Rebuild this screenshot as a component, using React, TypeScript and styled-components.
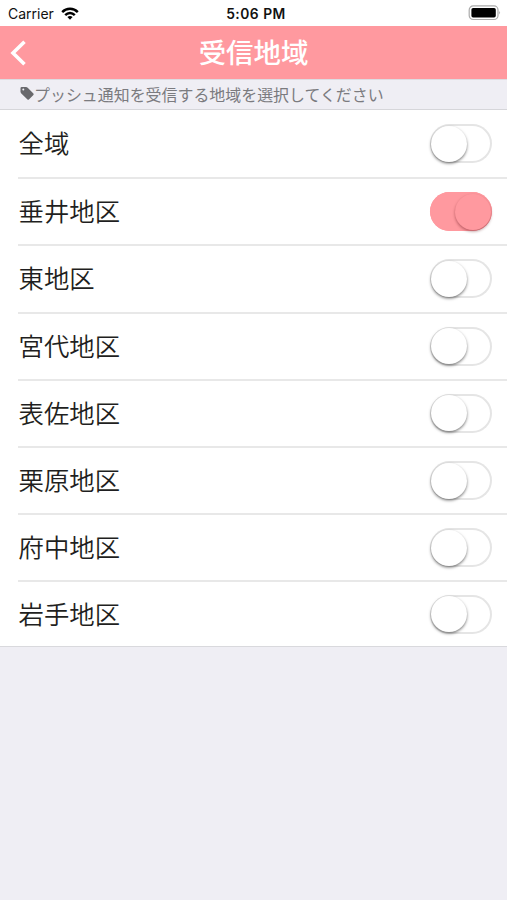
import React, { useState } from "react";
import styled, { createGlobalStyle } from "styled-components";

const GlobalStyle = createGlobalStyle`
  * { box-sizing: border-box; }
  body {
    margin: 0;
    background: #efeef4;
    font-family: "Noto Sans CJK JP", sans-serif;
  }
`;

const Screen = styled.div`
  width: 100%;
  min-height: 900px;
  background: #efeef4;
`;

const StatusBar = styled.div`
  display: grid;
  grid-template-columns: 1fr auto 1fr;
  align-items: center;
  height: 25.5px;
  padding: 1px 6px 0 8px;
  background: #fff;
  color: #111;
  font-family: Inter, sans-serif;
  font-size: 14px;
`;

const Carrier = styled.div`
  display: flex;
  align-items: center;
  gap: 7px;
`;

const Clock = styled.div`
  padding: 1px 0 0 3px;
  font-size: 13.8px;
  font-weight: 600;
  letter-spacing: 0.5px;
`;

const Battery = styled.svg`
  justify-self: end;
`;

const NavBar = styled.header`
  display: grid;
  grid-template-columns: 60px 1fr 60px;
  align-items: center;
  height: 53px;
  background: #ff999f;
  color: #fff;
`;

const BackButton = styled.button`
  display: flex;
  align-items: center;
  height: 53px;
  padding: 1px 0 0 10px;
  border: 0;
  background: none;
  color: inherit;
`;

const Title = styled.h1`
  margin: 0;
  padding-bottom: 3px;
  text-align: center;
  font-size: 27.4px;
  line-height: 50px;
  font-weight: 500;
`;

const Notice = styled.div`
  display: flex;
  align-items: center;
  height: 31.5px;
  padding: 0 0 1px 20px;
  border-top: 1px solid #dddce1;
  border-bottom: 1px solid #d6d6da;
  color: #7b7b7f;
  font-size: 15.95px;
  line-height: 28px;
  white-space: nowrap;
`;

const List = styled.ul`
  margin: 0;
  padding: 0 0 0 18px;
  list-style: none;
  background: #fff;
  border-bottom: 1px solid #d9d9dd;
`;

const Row = styled.li`
  display: flex;
  align-items: center;
  justify-content: space-between;
  height: 67.2px;
  padding-right: 15px;
  color: #1f1f21;
  font-size: 25.4px;
  font-weight: 350;
  line-height: 36px;

  &:last-child {
    height: 66px;
  }

  & + & {
    border-top: 2px solid #e8e8e8;
  }
`;

const Name = styled.span`
  padding: 0 0 3px 0.5px;
`;

const Track = styled.button<{ $on: boolean }>`
  display: flex;
  align-items: center;
  justify-content: ${(p) => (p.$on ? "flex-end" : "flex-start")};
  width: 62px;
  height: 39px;
  padding: 0 1px 0 0.5px;
  border: 0;
  border-radius: 20px;
  background: ${(p) => (p.$on ? "#ff999f" : "#fff")};
  box-shadow: inset 0 0 0 2px ${(p) => (p.$on ? "#ff999f" : "#e5e5e5")};
`;

const Knob = styled.span<{ $on: boolean }>`
  width: 36px;
  height: 36px;
  border-radius: 50%;
  background: ${(p) => (p.$on ? "#ff999f" : "#fff")};
  box-shadow: 0 1.5px 3px ${(p) => (p.$on ? "rgba(80,0,10,.4)" : "rgba(0,0,0,.5)")};
`;

const REGIONS = ["全域", "垂井地区", "東地区", "宮代地区", "表佐地区", "栗原地区", "府中地区", "岩手地区"];

const WifiIcon = () => (
  <svg width="18" height="13" viewBox="0 0 18 13" fill="none" stroke="#000" strokeWidth="2.4">
    <path d="M1.2 5.1C5.5.6 12.500.6 16.800 5.100" />
    <path d="M4.200 8.200C7 5.300 11 5.300 13.800 8.200" />
    <path d="M9 12.700L6.400 10C8 8.700 10 8.700 11.600 10Z" fill="#000" stroke="none" />
  </svg>
);

const TagIcon = () => (
  <svg width="14" height="15" viewBox="0 0 14 15">
    <path
      fill="#68686c"
      fillRule="evenodd"
      d="M.5 2.200Q.5 1 1.700 1H6Q7 1 7.700 1.700L13.400 7.500Q14 8.200 13.400 8.900L8.900 13.500Q8.200 14.200 7.500 13.500L1.300 7.400Q.5 6.600.5 5.700ZM3.300 2.600A1 1 0 1 0 3.300 4.600A1 1 0 1 0 3.300 2.600Z"
    />
  </svg>
);

export default function App() {
  const [enabled, setEnabled] = useState<string[]>(["垂井地区"]);
  const toggle = (name: string) =>
    setEnabled((list) => (list.includes(name) ? list.filter((n) => n !== name) : [...list, name]));

  return (
    <Screen>
      <GlobalStyle />
      <StatusBar>
        <Carrier>
          Carrier
          <WifiIcon />
        </Carrier>
        <Clock>5:06 PM</Clock>
        <Battery width="33" height="16" viewBox="0 0 33 16">
          <rect x="1.200" y=".9" width="28.800" height="13.600" rx="4" fill="#fff" stroke="#aaa" strokeWidth="1.200" />
          <rect x="3.400" y="3" width="24.400" height="9.500" rx="1.700" fill="#000" />
          <path d="M31.300 5.800Q33 7.700 31.300 9.600Z" fill="#999" />
        </Battery>
      </StatusBar>
      <NavBar>
        <BackButton aria-label="戻る">
          <svg width="17" height="26" viewBox="0 0 17 26" fill="none" stroke="#fff" strokeWidth="3.600">
            <path d="M14.500 1.800L3 13L14.500 24.200" />
          </svg>
        </BackButton>
        <Title>受信地域</Title>
      </NavBar>
      <Notice>
        <TagIcon />
        プッシュ通知を受信する地域を選択してください
      </Notice>
      <List>
        {REGIONS.map((name) => {
          const on = enabled.includes(name);
          return (
            <Row key={name}>
              <Name>{name}</Name>
              <Track $on={on} role="switch" aria-checked={on} aria-label={name} onClick={() => toggle(name)}>
                <Knob $on={on} />
              </Track>
            </Row>
          );
        })}
      </List>
    </Screen>
  );
}
